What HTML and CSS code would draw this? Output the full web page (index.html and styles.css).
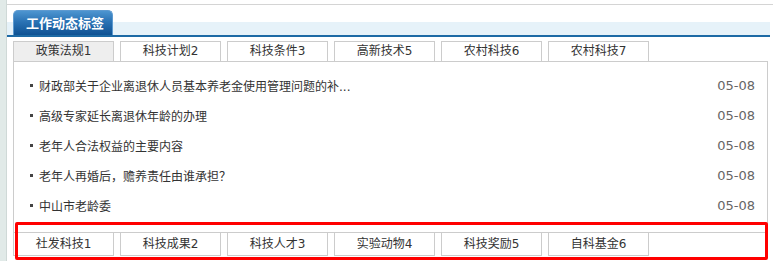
FILE: index.html
```html
<!DOCTYPE html>
<html lang="zh-CN">
<head>
    <meta charset="UTF-8">
    <meta name="viewport" content="width=device-width, initial-scale=1.0">
    <title>工作动态标签</title>
    <link rel="stylesheet" href="styles.css">
</head>
<body>
    <div class="page">
        <div class="side"></div>
        <div class="main">
            <div class="head">
                <div class="head-tab">工作动态标签</div>
            </div>

            <ul class="tabs">
                <li class="active">政策法规1</li>
                <li>科技计划2</li>
                <li>科技条件3</li>
                <li>高新技术5</li>
                <li>农村科技6</li>
                <li>农村科技7</li>
            </ul>

            <div class="box">
                <ul class="news">
                    <li><span class="title">财政部关于企业离退休人员基本养老金使用管理问题的补...</span><span class="date">05-08</span></li>
                    <li><span class="title">高级专家延长离退休年龄的办理</span><span class="date">05-08</span></li>
                    <li><span class="title">老年人合法权益的主要内容</span><span class="date">05-08</span></li>
                    <li><span class="title">老年人再婚后，赡养责任由谁承担？</span><span class="date">05-08</span></li>
                    <li><span class="title">中山市老龄委</span><span class="date">05-08</span></li>
                </ul>
            </div>

            <ul class="tabs tabs-bottom">
                <li>社发科技1</li>
                <li>科技成果2</li>
                <li>科技人才3</li>
                <li>实验动物4</li>
                <li>科技奖励5</li>
                <li>自科基金6</li>
            </ul>
        </div>
    </div>

    <!-- punainen merkintä kuvakaappauksessa -->
    <div class="mark"></div>
</body>
</html>
```

FILE: styles.css
```css
body {
    margin: 0;
    padding: 0;
    font-family: "DejaVu Sans", "Noto Sans CJK SC", sans-serif;
    font-size: 12px;
    color: #333;
    background-color: #fff;
    height: 261px;
    overflow: hidden;
}
.page {
    display: flex;
    height: 261px;
}
.side {
    width: 6px;
    background-color: #e1eae8;
    border-right: 1px solid #cfd9d7;
}
.main {
    flex: 1;
    margin-top: 4px;
    border-top: 1px solid #d4d4d4;
    padding-right: 3px;
}
.head {
    height: 30px;
    display: flex;
    align-items: flex-end;
    padding-left: 6px;
    background: linear-gradient(to bottom, #fff 0, #fff 17px, #e6f2f9 17px, #e6f2f9 100%);
    border-bottom: 2px solid #1d6aa5;
}
.head-tab {
    box-sizing: border-box;
    width: 100px;
    height: 25px;
    line-height: 24px;
    padding-left: 4px;
    text-align: center;
    color: #fff;
    font-weight: bold;
    font-size: 13px;
    font-family: "Noto Sans CJK SC", sans-serif;
    border: 1px solid #5d9ad0;
    border-bottom: none;
    border-radius: 5px 5px 0 0;
    background: linear-gradient(to bottom, #4d95d0 0%, #2a72b4 45%, #0f5293 100%);
}
.tabs {
    list-style: none;
    margin: 4px 0 0 6px;
    padding: 0;
    display: flex;
    gap: 6px;
}
.tabs li {
    box-sizing: border-box;
    width: 101px;
    height: 20px;
    line-height: 19px;
    text-align: center;
    border: 1px solid #ccc;
    border-bottom: none;
    background-color: #fff;
}
.tabs li.active {
    background-color: #eee;
}
.box {
    margin: 0 2px 0 6px;
    border: 1px solid #ccc;
    padding: 8px 0 12px 0;
}
.news {
    list-style: none;
    margin: 0;
    padding: 0 12px 0 16px;
}
.news li {
    display: flex;
    align-items: center;
    height: 30px;
}
.news li::before {
    content: "";
    width: 3px;
    height: 3px;
    background-color: #444;
    margin-right: 6px;
}
.title {
    flex: 1;
    color: #333;
}
.date {
    color: #666;
    font-size: 13px;
}
.tabs-bottom {
    margin-top: 0;
}
.tabs-bottom li {
    height: 23px;
    line-height: 22px;
    border-top: none;
    border-bottom: 1px solid #ccc;
}
.mark {
    position: absolute;
    left: 15px;
    top: 222px;
    width: 753px;
    height: 38px;
    box-sizing: border-box;
    border: 3px solid #f00;
    border-radius: 2px;
}
```
